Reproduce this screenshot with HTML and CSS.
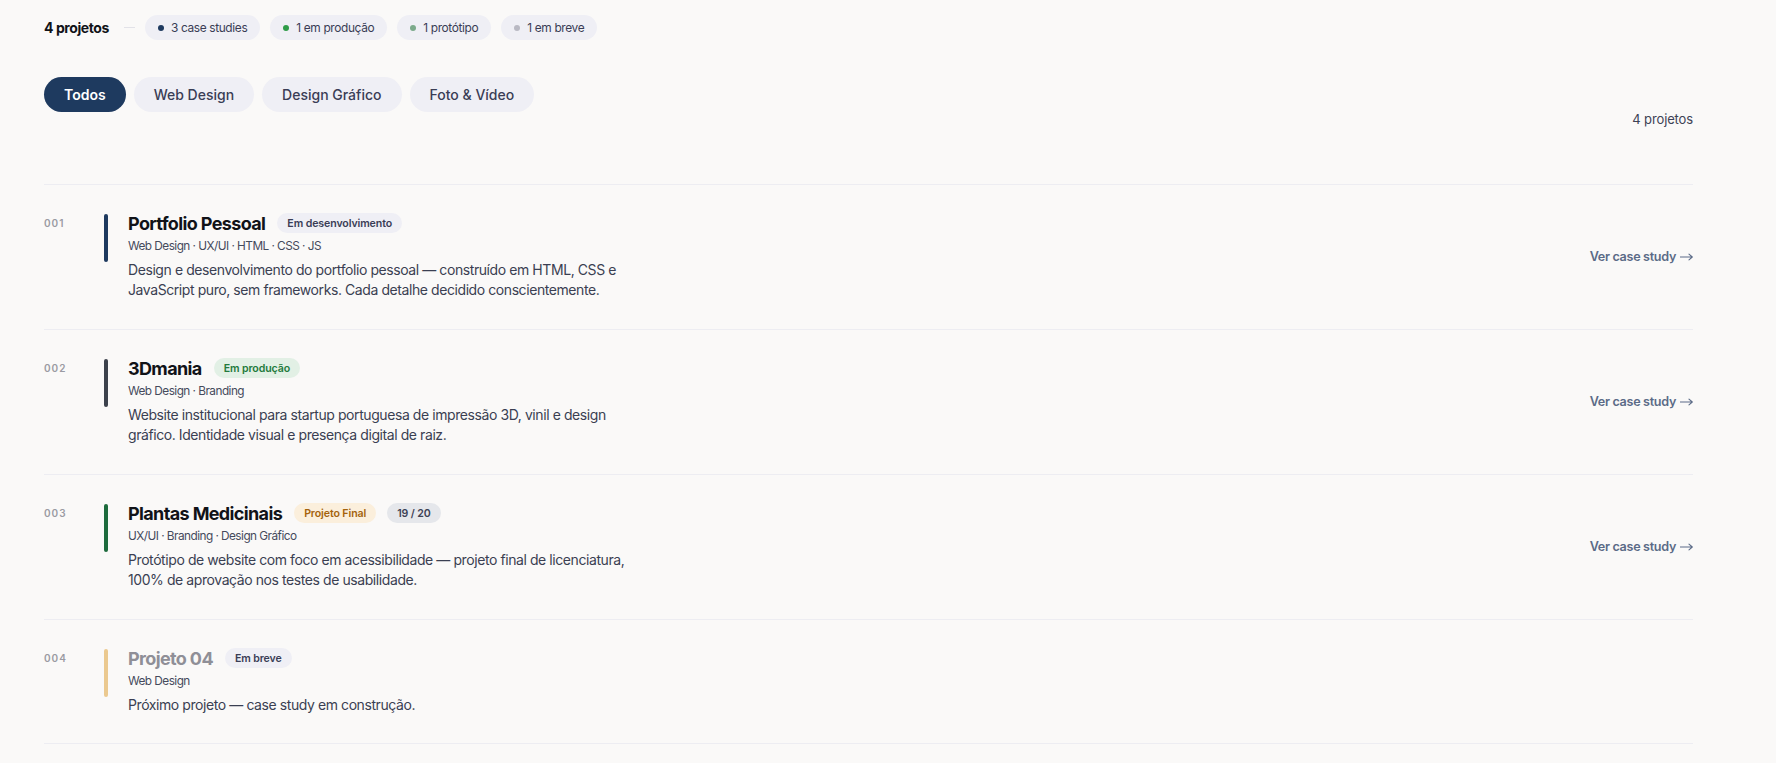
FILE: index.html
```html
<!DOCTYPE html>
<html lang="pt">
<head>
<meta charset="utf-8">
<title>Projetos</title>
<link rel="stylesheet" href="styles.css">
</head>
<body>
<div class="page">
  <div class="summary">
    <strong class="summary-total">4 projetos</strong>
    <span class="summary-sep"></span>
    <span class="stat"><i class="dot dot-navy"></i>3 case studies</span>
    <span class="stat"><i class="dot dot-green"></i>1 em produção</span>
    <span class="stat"><i class="dot dot-sage"></i>1 protótipo</span>
    <span class="stat"><i class="dot dot-grey"></i>1 em breve</span>
  </div>

  <div class="filters">
    <button class="tab tab-active">Todos</button>
    <button class="tab">Web Design</button>
    <button class="tab">Design Gráfico</button>
    <button class="tab">Foto &amp; Vídeo</button>
  </div>
  <div class="count">4 projetos</div>

  <ul class="projects">
    <li class="project">
      <span class="num">001</span>
      <span class="bar bar-navy"></span>
      <div class="body">
        <div class="head">
          <h3 class="title">Portfolio Pessoal</h3>
          <span class="badge badge-neutral">Em desenvolvimento</span>
        </div>
        <p class="tags">Web Design · UX/UI · HTML · CSS · JS</p>
        <p class="desc">Design e desenvolvimento do portfolio pessoal — construído em HTML, CSS e<br>JavaScript puro, sem frameworks. Cada detalhe decidido conscientemente.</p>
      </div>
      <a class="link" href="#">Ver case study<svg class="arrow" viewBox="0 0 13 8" width="13" height="8" aria-hidden="true"><path d="M0 4H12M9 1.2L12.3 4L9 6.8" fill="none" stroke="currentColor" stroke-width="1.1" stroke-linecap="round" stroke-linejoin="round"/></svg></a>
    </li>
    <li class="project">
      <span class="num">002</span>
      <span class="bar bar-slate"></span>
      <div class="body">
        <div class="head">
          <h3 class="title">3Dmania</h3>
          <span class="badge badge-green">Em produção</span>
        </div>
        <p class="tags">Web Design · Branding</p>
        <p class="desc">Website institucional para startup portuguesa de impressão 3D, vinil e design<br>gráfico. Identidade visual e presença digital de raiz.</p>
      </div>
      <a class="link" href="#">Ver case study<svg class="arrow" viewBox="0 0 13 8" width="13" height="8" aria-hidden="true"><path d="M0 4H12M9 1.2L12.3 4L9 6.8" fill="none" stroke="currentColor" stroke-width="1.1" stroke-linecap="round" stroke-linejoin="round"/></svg></a>
    </li>
    <li class="project">
      <span class="num">003</span>
      <span class="bar bar-green"></span>
      <div class="body">
        <div class="head">
          <h3 class="title">Plantas Medicinais</h3>
          <span class="badge badge-amber">Projeto Final</span>
          <span class="badge badge-grade">19 / 20</span>
        </div>
        <p class="tags">UX/UI · Branding · Design Gráfico</p>
        <p class="desc">Protótipo de website com foco em acessibilidade — projeto final de licenciatura,<br>100% de aprovação nos testes de usabilidade.</p>
      </div>
      <a class="link" href="#">Ver case study<svg class="arrow" viewBox="0 0 13 8" width="13" height="8" aria-hidden="true"><path d="M0 4H12M9 1.2L12.3 4L9 6.8" fill="none" stroke="currentColor" stroke-width="1.1" stroke-linecap="round" stroke-linejoin="round"/></svg></a>
    </li>
    <li class="project project-soon">
      <span class="num">004</span>
      <span class="bar bar-tan"></span>
      <div class="body">
        <div class="head">
          <h3 class="title title-muted">Projeto 04</h3>
          <span class="badge badge-neutral">Em breve</span>
        </div>
        <p class="tags">Web Design</p>
        <p class="desc">Próximo projeto — case study em construção.</p>
      </div>
    </li>
  </ul>
</div>
</body>
</html>
```
FILE: styles.css
```css
* { box-sizing: border-box; }
html, body { margin: 0; padding: 0; }
body {
  background: #faf9f8;
  font-family: Inter, "Noto Sans", sans-serif;
  color: #3a3f52;
}
.page {
  width: 1693px;
  padding: 15px 0 0 44px;
}

/* summary */
.summary {
  display: flex;
  align-items: center;
  height: 25px;
}
.summary-total {
  font-size: 14px;
  font-weight: 700;
  color: #111318;
  letter-spacing: -0.03em;
}
.summary-sep {
  width: 11px;
  height: 1px;
  background: #e2e2e8;
  margin: 0 10px 0 15px;
}
.stat {
  display: inline-flex;
  align-items: center;
  height: 25px;
  padding: 0 13px;
  margin-right: 10px;
  border-radius: 13px;
  background: #efeff5;
  font-size: 11.9px;
  letter-spacing: -0.03em;
  color: #3a3d55;
}
.dot {
  width: 6px;
  height: 6px;
  border-radius: 50%;
  margin-right: 7px;
}
.dot-navy { background: #1e3a5f; }
.dot-green { background: #2f9c48; }
.dot-sage { background: #7caa8b; }
.dot-grey { background: #b9b9c3; }

/* filters */
.filters {
  display: flex;
  gap: 8px;
  margin-top: 37px;
}
.tab {
  height: 35px;
  padding: 0 20px;
  border: 0;
  border-radius: 18px;
  background: #efeff5;
  color: #3a3d55;
  font-family: inherit;
  font-size: 14px;
  font-weight: 500;
}
.tab-active {
  background: #1e3a5f;
  color: #ffffff;
  font-weight: 600;
}
.count {
  margin-top: -1px;
  text-align: right;
  font-size: 13px;
  line-height: 16px;
  color: #3d4255;
  letter-spacing: -0.01em;
}

/* projects */
.projects {
  list-style: none;
  margin: 57px 0 0;
  padding: 0;
  border-top: 1px solid #ededf2;
}
.project {
  display: flex;
  align-items: flex-start;
  padding: 28px 0 29px;
  border-bottom: 1px solid #ededf2;
}
.project-soon { padding-bottom: 28px; }
.num {
  width: 60px;
  font-size: 10px;
  line-height: 20px;
  font-weight: 600;
  letter-spacing: 0.1em;
  color: #9a9ba3;
}
.bar {
  width: 4px;
  height: 48px;
  margin-top: 1px;
  margin-right: 20px;
  border-radius: 2px;
}
.bar-navy { background: #1e3a5f; }
.bar-slate { background: #3c424c; }
.bar-green { background: #1d6b3d; }
.bar-tan { background: #ebc98f; }
.body { flex: 1; }
.head {
  display: flex;
  align-items: center;
  height: 20px;
}
.title {
  margin: 0 12px 0 0;
  font-size: 18px;
  font-weight: 700;
  letter-spacing: -0.035em;
  color: #111318;
}
.title-muted { color: #8f8f97; }
.badge {
  display: inline-flex;
  align-items: center;
  height: 20px;
  padding: 0 10px;
  margin-right: 11px;
  border-radius: 10px;
  font-size: 10.6px;
  font-weight: 600;
  letter-spacing: -0.01em;
}
.badge-neutral { background: #efeff5; color: #3a3d55; }
.badge-green { background: #e2f0e5; color: #237a3c; }
.badge-amber { background: #fbefdc; color: #a4630c; }
.badge-grade { background: #e5e7eb; color: #3d4255; }
.tags {
  margin: 5px 0 0;
  font-size: 11.8px;
  line-height: 16px;
  letter-spacing: -0.045em;
  color: #454a5c;
}
.desc {
  margin: 6px 0 0;
  font-size: 14px;
  line-height: 20px;
  letter-spacing: -0.03em;
  color: #3a3f52;
}
.link {
  align-self: center;
  display: inline-flex;
  align-items: center;
  font-size: 12.6px;
  font-weight: 600;
  letter-spacing: -0.025em;
  color: #5b6b87;
  text-decoration: none;
}
.arrow {
  margin-left: 4px;
  margin-top: 1px;
}
```
